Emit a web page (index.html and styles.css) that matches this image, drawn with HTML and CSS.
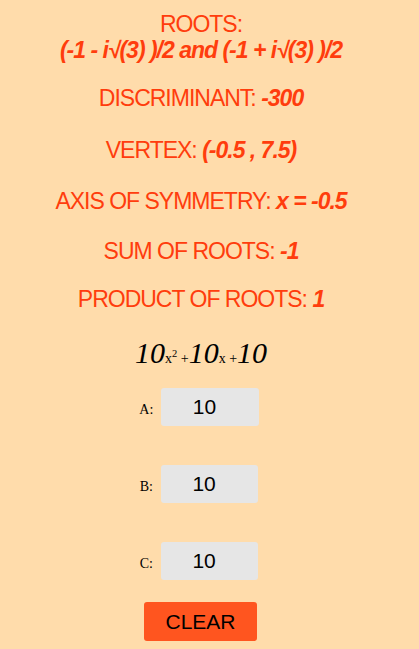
FILE: index.html
```html
<!DOCTYPE html>
<html lang="en">
<head>
<meta charset="utf-8">
<title>Quadratic</title>
<link rel="stylesheet" href="styles.css">
</head>
<body>
<main class="app">
  <section class="results">
    <p class="result">ROOTS:<br><b>(-1 - i√(3) )/2 and (-1 + i√(3) )/2</b></p>
    <p class="result result-discriminant">DISCRIMINANT: <b>-300</b></p>
    <p class="result result-vertex">VERTEX: <b>(-0.5 , 7.5)</b></p>
    <p class="result result-axis">AXIS OF SYMMETRY: <b>x = -0.5</b></p>
    <p class="result result-sum">SUM OF ROOTS: <b>-1</b></p>
    <p class="result result-product">PRODUCT OF ROOTS: <b>1</b></p>
  </section>
  <p class="equation"><i>10</i><span class="term">x<sup>2</sup> +</span><i>10</i><span class="term">x +</span><i>10</i></p>
  <form class="coefficients">
    <label class="field"><span class="field-label">A:</span><input class="field-input" type="text" value="10"></label>
    <label class="field"><span class="field-label">B:</span><input class="field-input" type="text" value="10"></label>
    <label class="field"><span class="field-label">C:</span><input class="field-input" type="text" value="10"></label>
    <button class="clear" type="button">CLEAR</button>
  </form>
</main>
</body>
</html>
```
FILE: styles.css
```css
* { box-sizing: border-box; }
html, body { margin: 0; padding: 0; }
body {
  width: 419px;
  height: 649px;
  overflow: hidden;
  background: #ffdcab;
  font-family: "Liberation Serif", serif;
}
.app {
  display: flex;
  flex-direction: column;
  align-items: center;
  width: 402px;
  padding-top: 11px;
}
.results {
  display: flex;
  flex-direction: column;
  align-items: center;
}
.result {
  margin: 0;
  font-family: "Liberation Sans", Arial, sans-serif;
  font-size: 23px;
  line-height: 26px;
  letter-spacing: -1px;
  color: #ff3d0d;
  text-align: center;
  white-space: nowrap;
}
.result b { font-style: italic; font-weight: 700; }
.result-discriminant { margin-top: 22px; }
.result-vertex { margin-top: 26px; }
.result-axis { margin-top: 25px; }
.result-sum { margin-top: 24px; }
.result-product { margin-top: 22px; }
.equation {
  margin: 21px 0 0;
  height: 40px;
  font-size: 30px;
  line-height: 40px;
  color: #000;
  white-space: nowrap;
}
.equation .term { font-size: 14px; }
.equation sup { font-size: 10.5px; line-height: 0; }
.coefficients {
  display: flex;
  flex-direction: column;
  align-items: center;
  margin-top: 15px;
}
.field {
  display: flex;
  align-items: baseline;
  gap: 8px;
  padding-right: 4px;
  margin-bottom: 39px;
  font-size: 14px;
}
.field-input {
  width: 97.4px;
  height: 38px;
  padding: 0 11px 0 0;
  border: 0;
  border-radius: 3px;
  background: #e6e6e6;
  color: #000;
  font-family: "Liberation Sans", Arial, sans-serif;
  font-size: 21px;
  text-align: center;
}
.clear {
  width: 113px;
  height: 39px;
  margin: -17px 1px 0 0;
  border: 0;
  border-radius: 3px;
  background: #ff551f;
  color: #000;
  font-family: "Liberation Sans", Arial, sans-serif;
  font-size: 21px;
}
```
